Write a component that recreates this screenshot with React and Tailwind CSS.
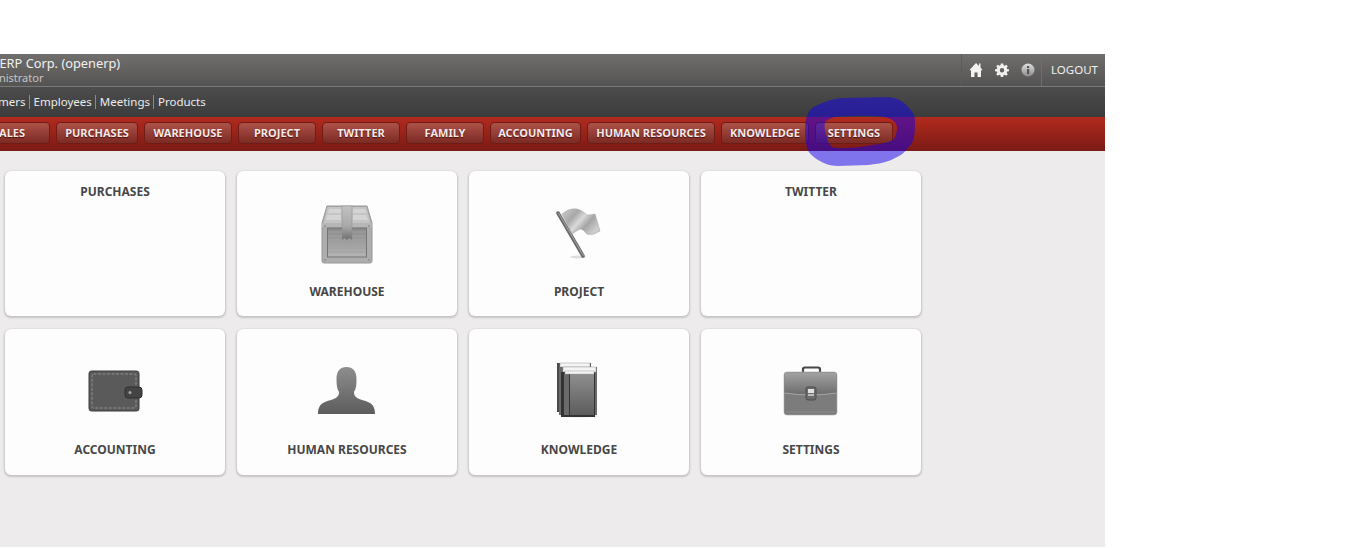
import React from "react";

const tabs = [
  { name: "SALES", width: "w-[82px]" },
  { name: "PURCHASES", width: "w-[82px]" },
  { name: "WAREHOUSE", width: "w-[88px]" },
  { name: "PROJECT", width: "w-[78px]" },
  { name: "TWITTER", width: "w-[78px]" },
  { name: "FAMILY", width: "w-[78px]" },
  { name: "ACCOUNTING", width: "w-[91px]" },
  { name: "HUMAN RESOURCES", width: "w-[128px]" },
  { name: "KNOWLEDGE", width: "w-[88px]" },
  { name: "SETTINGS", width: "w-[78px]" },
];

const shortcuts = ["Customers", "Employees", "Meetings", "Products"];

const Defs = () => (
  <svg width="0" height="0" className="absolute">
    <defs>
      <linearGradient id="metal" x1="0" y1="0" x2="0" y2="1">
        <stop offset="0" stopColor="#8a8a8a" />
        <stop offset="1" stopColor="#b4b4b4" />
      </linearGradient>
      <linearGradient id="strap" x1="0" y1="0" x2="0" y2="1">
        <stop offset="0" stopColor="#c2c2c2" />
        <stop offset="0.6" stopColor="#a8a8a8" />
        <stop offset="1" stopColor="#6e6e6e" />
      </linearGradient>
      <linearGradient id="dark" x1="0" y1="0" x2="0" y2="1">
        <stop offset="0" stopColor="#8e8e8e" />
        <stop offset="1" stopColor="#5c5c5c" />
      </linearGradient>
      <linearGradient id="flap" x1="0" y1="0" x2="0" y2="1">
        <stop offset="0" stopColor="#a2a2a2" />
        <stop offset="1" stopColor="#6c6c6c" />
      </linearGradient>
      <linearGradient id="flag" x1="0" y1="0" x2="1" y2="0.600">
        <stop offset="0" stopColor="#cfcfcf" />
        <stop offset="0.35" stopColor="#a8a8a8" />
        <stop offset="0.55" stopColor="#dadada" />
        <stop offset="0.75" stopColor="#a4a4a4" />
        <stop offset="1" stopColor="#cccccc" />
      </linearGradient>
      <linearGradient id="info" x1="0" y1="0" x2="0" y2="1">
        <stop offset="0" stopColor="#e0e0e0" />
        <stop offset="1" stopColor="#8a8a8a" />
      </linearGradient>
    </defs>
  </svg>
);

const ChestIcon = () => (
  <svg width="64" height="64" viewBox="0 0 64 64">
    <path d="M12 5H52L57 22V60Q57 62 55 62H9Q7 62 7 60V22Z" fill="#adadad" stroke="#969696" />
    <path d="M12.500 6H51.500L55.500 22H8.500Z" fill="#c4c4c4" />
    <path d="M14 8H26V19H11ZM38 8H50L53 19H38Z" fill="#d4d4d4" />
    <path d="M12 13H26M38 13H52" stroke="#b6b6b6" />
    <rect x="7" y="22" width="50" height="4" fill="#b6b6b6" />
    <rect x="12.500" y="27" width="39" height="29" fill="url(#metal)" stroke="#757575" />
    <path d="M13 31H51M13 35H51M13 39H51M13 43H51M13 47H51M13 51H51" stroke="#a0a0a0" />
    <circle cx="10" cy="25" r="0.800" fill="#777777" />
    <circle cx="54" cy="25" r="0.800" fill="#777777" />
    <circle cx="10" cy="59" r="0.800" fill="#777777" />
    <circle cx="54" cy="59" r="0.800" fill="#777777" />
    <path d="M27 5H37V39L34.500 37L32 39L29.500 37L27 39Z" fill="url(#strap)" stroke="#8c8c8c" strokeWidth="0.500" />
  </svg>
);

const FlagIcon = () => (
  <svg width="64" height="64" viewBox="0 0 64 64">
    <ellipse cx="31" cy="56" rx="8" ry="1.500" fill="#dddddd" />
    <path d="M11 12L36 55" stroke="#6a6a6a" strokeWidth="3.500" strokeLinecap="round" />
    <path d="M11.500 12L36.500 55" stroke="#a4a4a4" strokeWidth="1" />
    <path d="M15 13Q22 7 30 8Q35 9 40 14Q44 14 48 13L53 30L47 33Q43 34 40 33Q36 28 33 28Q29 30 25 33Z" fill="url(#flag)" stroke="#a0a0a0" strokeWidth="0.500" />
  </svg>
);

const WalletIcon = () => (
  <svg width="64" height="64" viewBox="0 0 64 64">
    <rect x="6" y="12" width="50" height="40" rx="2.500" fill="#5a5a5a" stroke="#3c3c3c" />
    <rect x="9" y="15" width="44" height="34" rx="1.500" fill="none" stroke="#8e8e8e" strokeDasharray="3 1.500" />
    <rect x="42" y="28" width="17" height="11" rx="3" fill="#444444" stroke="#2f2f2f" />
    <circle cx="47" cy="33.500" r="1.500" fill="#a8a8a8" />
  </svg>
);

const PersonIcon = () => (
  <svg width="64" height="64" viewBox="0 0 64 64">
    <path d="M3 55C3 45 8 43 16 41C22 39 24 37 24 33C22 30 21.500 26 21.500 20C21.500 12 25 8 31.500 8C38 8 41.500 12 41.500 20C41.500 26 41 30 39 33C39 37 41 39 47 41C55 43 60 45 60 55Z" fill="url(#dark)" />
  </svg>
);

const BooksIcon = () => (
  <svg width="64" height="64" viewBox="0 0 64 64">
    <ellipse cx="32" cy="57" rx="19" ry="1.500" fill="#dedede" />
    <rect x="10" y="4" width="34" height="49" fill="#4a4a4a" />
    <rect x="13" y="4" width="30" height="4" fill="#f4f4f4" stroke="#9a9a9a" strokeWidth="0.500" />
    <rect x="12" y="8" width="38" height="48" fill="#6a6a6a" />
    <rect x="16" y="8" width="33" height="5" fill="#f4f4f4" stroke="#9a9a9a" strokeWidth="0.500" />
    <rect x="14" y="13" width="34" height="45" fill="#333333" />
    <rect x="17" y="15" width="5" height="41" fill="#6a6a6a" />
    <rect x="23" y="15" width="24" height="41" fill="url(#dark)" />
    <rect x="18" y="12" width="29" height="3" fill="#f6f6f6" stroke="#a0a0a0" strokeWidth="0.500" />
  </svg>
);

const BriefcaseIcon = () => (
  <svg width="64" height="64" viewBox="0 0 64 64">
    <path d="M24 13V10Q24 8.500 26 8.500H39Q41 8.500 41 10V13" fill="none" stroke="#484848" strokeWidth="2.200" />
    <rect x="5" y="13" width="53" height="43" rx="3" fill="#7c7c7c" stroke="#a8a8a8" strokeWidth="0.600" />
    <path d="M5.500 16Q5.500 13.500 8 13.500H55Q57.500 13.500 57.500 16V34Q32 38 5.500 34Z" fill="url(#flap)" />
    <path d="M5.500 34Q32 38 57.500 34" stroke="#a6a6a6" fill="none" />
    <path d="M7 53H56" stroke="#8c8c8c" />
    <rect x="27" y="28" width="10" height="13" rx="2" fill="#6c6c6c" stroke="#4c4c4c" />
    <rect x="29" y="30" width="6" height="4" fill="#e2e2e2" />
    <rect x="29" y="35" width="6" height="2" fill="#bcbcbc" />
  </svg>
);

const cards = [
  { name: "PURCHASES" },
  { name: "WAREHOUSE", Icon: ChestIcon },
  { name: "PROJECT", Icon: FlagIcon },
  { name: "TWITTER" },
  { name: "ACCOUNTING", Icon: WalletIcon },
  { name: "HUMAN RESOURCES", Icon: PersonIcon },
  { name: "KNOWLEDGE", Icon: BooksIcon },
  { name: "SETTINGS", Icon: BriefcaseIcon },
];

const Card = ({ name, Icon }) => (
  <div className="h-[145.5px] rounded-md bg-[#fdfdfd] shadow-[0_1px_2px_1px_rgba(0,0,0,0.17)] flex flex-col items-center">
    {Icon ? (
      <>
        <div className="mt-[30px] h-[64px]">
          <Icon />
        </div>
        <div className="mt-[18px] text-[12px] leading-[18px] font-bold text-[#474747]">{name}</div>
      </>
    ) : (
      <div className="mt-3 text-[12px] leading-[18px] font-bold text-[#474747]">{name}</div>
    )}
  </div>
);

const HomeIcon = () => (
  <svg width="16" height="16" viewBox="0 0 16 16">
    <path d="M8 1L1.500 8L3 8.500V15H6.500V10.500H9.500V15H13V8.500L14.500 8L12.500 5.500V1.500H11V4Z" fill="#f2f2f2" />
  </svg>
);

const GearIcon = () => (
  <svg width="14" height="14" viewBox="0 0 14 14">
    <path
      fillRule="evenodd"
      d="M5.800 0.500H8.200L8.500 2.300L9.700 2.800L11.200 1.700L12.800 3.300L11.700 4.800L12.200 6L14 6.300V8.200L12.200 8.500L11.700 9.700L12.800 11.200L11.200 12.800L9.700 11.700L8.500 12.200L8.200 14H5.800L5.500 12.200L4.300 11.700L2.800 12.800L1.200 11.200L2.300 9.700L1.800 8.500L0 8.200V6.300L1.800 6L2.300 4.800L1.200 3.300L2.800 1.700L4.300 2.800L5.500 2.300ZM7 5A2.200 2.200 0 1 0 7 9.400A2.200 2.200 0 1 0 7 5Z"
      fill="#efefef"
    />
  </svg>
);

const InfoIcon = () => (
  <svg width="14" height="14" viewBox="0 0 14 14">
    <circle cx="7" cy="7" r="6.500" fill="url(#info)" />
    <rect x="6" y="6" width="2.200" height="5" fill="#555555" />
    <rect x="6" y="3" width="2.200" height="2" fill="#555555" />
  </svg>
);

export default function App() {
  return (
    <div className="relative h-[548px] w-[1348px] overflow-hidden bg-white font-['Noto_Sans','Open_Sans',sans-serif]">
      <Defs />
      <div className="mt-[54px] w-[1105px]">
        <div className="h-[33px] flex justify-between overflow-hidden bg-gradient-to-b from-[#716f6d] to-[#545353] border-b border-[#7a7878]">
          <div className="-ml-[33.5px] pt-px text-[12.8px] leading-[17px] text-[#f0f0f0]">
            <div className="whitespace-nowrap">OpenERP Corp. (openerp)</div>
            <div className="-mt-px text-[11px] leading-[13px] text-[#c4c4c4] ml-[5.5px] whitespace-nowrap">Administrator</div>
          </div>
          <div className="flex h-full">
            <div className="w-[80px] border-l border-[#5c5c5c] flex items-center pl-px">
              <span className="w-[26px] flex justify-center"><HomeIcon /></span>
              <span className="w-[26px] flex justify-center"><GearIcon /></span>
              <span className="w-[26px] flex justify-center"><InfoIcon /></span>
            </div>
            <div className="w-[64px] border-l border-[#6e6e6e] pl-[2px] flex items-center justify-center text-[11.500px] text-[#f0f0f0]">LOGOUT</div>
          </div>
        </div>

        <div className="h-[30px] flex items-center overflow-hidden bg-gradient-to-b from-[#4c4c4c] to-[#3c3c3c] text-[11.500px] text-[#ececec]">
          <div className="-ml-[33px] flex items-center">
            {shortcuts.map((s, i) => (
              <span key={s} className={i ? "ml-[3px] pl-[4px] border-l border-[#8a8a8a] leading-[14px]" : "leading-[14px]"}>
                {s}
              </span>
            ))}
          </div>
        </div>

        <div className="h-[34px] pt-[5px] overflow-hidden bg-gradient-to-b from-[#b32a1e] to-[#7a1b15]">
          <div className="flex gap-[6px] -ml-[32px]">
            {tabs.map((t) => (
              <div
                key={t.name}
                className={`${t.width} h-[22px] pt-px shrink-0 rounded-[4px] border border-[#6f1c16] bg-gradient-to-b from-[#ad5249] to-[#7c2a24] flex items-center justify-center text-[11px] font-bold text-[#f4e9e8] [text-shadow:0_1px_1px_rgba(60,0,0,0.8)]`}
              >
                {t.name}
              </div>
            ))}
          </div>
        </div>

        <div className="h-[396px] bg-[#edebec] pl-[5px] pt-[19.5px]">
          <div className="grid grid-cols-[repeat(4,220px)] gap-x-[12px] gap-y-[13px]">
            {cards.map((c) => (
              <Card key={c.name} {...c} />
            ))}
          </div>
        </div>
      </div>

      {/* hand drawn marker circle over the settings tab */}
      <svg className="absolute left-[800px] top-[92px] opacity-50" width="122" height="80" viewBox="0 0 122 80">
        <path
          fillRule="evenodd"
          fill="#1400ec"
          d="M25 10C33 7 38 6 45 6L88 5C98 6 104 10 108 15C113 20 115 24 115 28C115 35 115 40 114 45C113 50 111 53 108 56C104 61 100 64 95 66C88 70 78 72 68 73L38 74C30 74 23 71 18 68C12 64 8 60 7 56C5 48 5 42 5 35C5 28 7 23 10 18C14 14 20 12 25 10ZM25 30C28 27 31 26 35 25C45 24 55 24 62 24C72 24 82 24 88 26C94 28 97 32 97 36C97 41 95 46 93 48C87 51 80 52 72 53C63 55 53 56 45 56C38 56 34 56 32 55C29 52 27 49 27 45C25 40 24 35 25 30Z"
        />
      </svg>
    </div>
  );
}
